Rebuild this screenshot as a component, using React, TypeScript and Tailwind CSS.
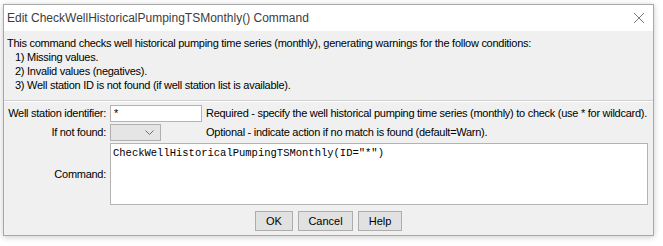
import React from "react";

export default function App() {
  const ui = { fontFamily: '"Liberation Sans", Arial, sans-serif' };
  const mono = { fontFamily: '"Liberation Mono", "Courier New", monospace' };
  return (
    <div className="w-[663px] h-[246px] bg-white overflow-hidden" style={ui}>
      <div className="ml-[3px] mt-[4px] w-[651px] h-[232px] border border-[#a8a8a8] shadow-[0_1px_6px_rgba(0,0,0,0.22)] flex flex-col bg-[#f0f0f0]">
        {/* Title bar */}
        <div className="h-[26px] bg-white flex items-center justify-between pl-[3px] pr-[7px]">
          <span className="text-[12px] text-[#3c3c3c]">Edit CheckWellHistoricalPumpingTSMonthly() Command</span>
          <svg width="12" height="12" viewBox="0 0 12 12" className="mr-[1px]">
            <path d="M1 1 L11 11 M11 1 L1 11" stroke="#7a7a7a" strokeWidth="1" fill="none" />
          </svg>
        </div>
        {/* Description */}
        <div className="pt-[5px] px-[3px] text-[11px] leading-[14px] tracking-[-0.27px] text-black whitespace-nowrap">
          <div>This command checks well historical pumping time series (monthly), generating warnings for the follow conditions:</div>
          <div className="pl-[8px]">1) Missing values.</div>
          <div className="pl-[8px]">2) Invalid values (negatives).</div>
          <div className="pl-[8px]">3) Well station ID is not found (if well station list is available).</div>
        </div>
        <div className="mt-[8px] border-t border-[#d0d0d0] border-b border-b-white" />
        {/* Form */}
        <div className="mt-[3px] grid grid-cols-[99px_92px_1fr] gap-x-[4px] gap-y-[2px] pl-[3px] pr-[5px] text-[11px] tracking-[-0.27px] text-black whitespace-nowrap">
          <div className="h-[17px] flex items-center justify-end">Well station identifier:</div>
          <div className="h-[17px] bg-white border border-[#b4b4b4] flex items-center pl-[3px]">*</div>
          <div className="h-[17px] flex items-center">Required - specify the well historical pumping time series (monthly) to check (use * for wildcard).</div>

          <div className="h-[17px] flex items-center justify-end">If not found:</div>
          <div className="h-[17px]">
            <div className="w-[51px] h-[17px] bg-[#e5e5e5] border border-[#b0b0b0] flex items-center justify-end pr-[6px]">
              <svg width="9" height="6" viewBox="0 0 9 6">
                <path d="M0.5 0.5 L4.5 4.5 L8.5 0.5" stroke="#6d6d6d" strokeWidth="1" fill="none" />
              </svg>
            </div>
          </div>
          <div className="h-[17px] flex items-center">Optional - indicate action if no match is found (default=Warn).</div>

          <div className="h-[62px] flex items-center justify-end">Command:</div>
          <div className="col-span-2 h-[62px] bg-white border border-[#b4b4b4] pl-[2px] pt-[2px] text-[10.5px] leading-[14px] tracking-normal" style={mono}>
            CheckWellHistoricalPumpingTSMonthly(ID="*")
          </div>
        </div>
        {/* Buttons */}
        <div className="mt-[6px] flex justify-center gap-[5px] text-[11px] text-black">
          <div className="w-[38px] h-[20px] bg-[#e1e1e1] border border-[#adadad] flex items-center justify-center">OK</div>
          <div className="w-[55px] h-[20px] bg-[#e1e1e1] border border-[#adadad] flex items-center justify-center">Cancel</div>
          <div className="w-[44px] h-[20px] bg-[#e1e1e1] border border-[#adadad] flex items-center justify-center">Help</div>
        </div>
      </div>
    </div>
  );
}
